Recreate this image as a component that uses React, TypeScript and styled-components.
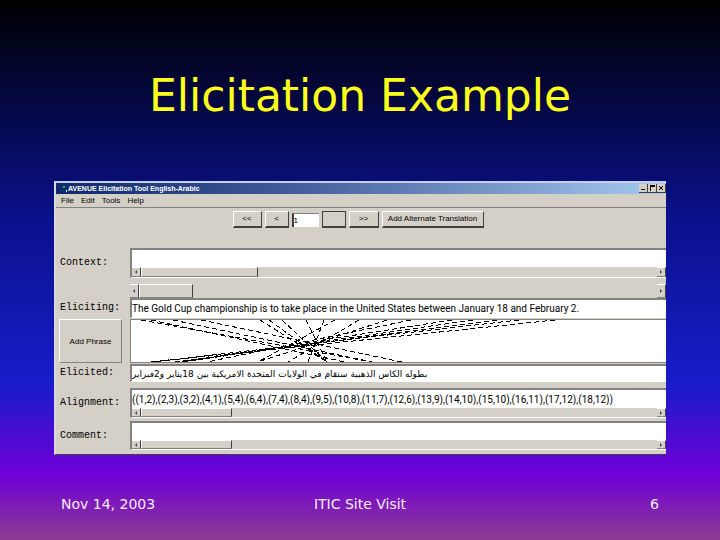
import React from "react";
import styled, { createGlobalStyle } from "styled-components";

const face = "#d4d0c8";
const shade = "#848280";
const dark = "#404040";

const Global = createGlobalStyle`
  * { box-sizing: border-box; }
  body { margin: 0; font-family: "Liberation Sans", Arial, sans-serif; font-size: 10px; color: #000; }
  button, input { font: inherit; color: inherit; border-radius: 0; }
`;

const Slide = styled.main`
  display: flex;
  flex-direction: column;
  align-items: center;
  min-height: 100vh;
  background: linear-gradient(#000000 0%, #0a118a 40%, #181cca 71%, #7000d8 88%, #8c3c90 100%);
`;

const Title = styled.h1`
  margin: 68px 0 57px;
  font: 400 44px/56px Verdana, "DejaVu Sans", sans-serif;
  color: #ffff1c;
`;

const AppWindow = styled.section`
  width: 85%;
  overflow: hidden;
  background: ${face};
  border-top: 2px solid #c4cff0;
  border-left: 2px solid #d8d8e0;
  border-bottom: 1px solid ${dark};
`;

const TitleBar = styled.header`
  display: flex;
  align-items: center;
  height: 11px;
  padding-left: 6px;
  background: linear-gradient(90deg, #0e2a6c, #3c5898 36%, #7c9ccc 74%, #a6caf0);
`;

const Caption = styled.h2`
  flex: 1;
  margin: 0;
  font-size: 7px;
  line-height: 11px;
  font-weight: 700;
  color: #fff;
`;

const CaptionButtons = styled.div`
  display: flex;
`;

const CaptionButton = styled.button`
  display: flex;
  width: 9px;
  height: 9px;
  padding: 0;
  border: 0;
  border-right: 1px solid ${dark};
  border-bottom: 1px solid ${dark};
  background: ${face};
`;

const MenuBar = styled.nav`
  display: flex;
  gap: 7px;
  height: 14px;
  padding-left: 5px;
  border-bottom: 1px solid ${shade};
`;

const MenuItem = styled.button`
  padding: 0;
  border: 0;
  background: none;
  font-size: 8px;
  line-height: 13px;
`;

const ToolBar = styled.div`
  display: flex;
  justify-content: center;
  gap: 3px;
  padding: 3px 6px 20px 0;
`;

const ToolButton = styled.button<{ $w: number; $active?: boolean }>`
  width: ${(p) => p.$w}px;
  height: 17px;
  padding: 0;
  font-size: 8px;
  line-height: 14px;
  white-space: nowrap;
  background: ${face};
  border: 1px solid ${(p) => (p.$active ? dark : "#fff")};
  border-right: 1px solid ${dark};
  border-bottom: 2px solid ${dark};
`;

const IndexInput = styled.input`
  width: 27px;
  height: 14px;
  margin-top: 2px;
  padding: 0;
  font-size: 8px;
  background: #fff;
  border: 0;
  border-top: 1px solid ${shade};
  border-left: 2px solid ${dark};
`;

const Form = styled.div`
  display: grid;
  grid-template-columns: 63px 1fr;
  column-gap: 8px;
  padding: 0 0 4px 3px;
`;

const Label = styled.label`
  align-self: center;
  padding-left: 1px;
  font: 10px/12px "Liberation Mono", "Courier New", monospace;
`;

const Row = styled.div<{ $gap: number }>`
  grid-column: 1 / -1;
  display: grid;
  grid-template-columns: subgrid;
  margin-bottom: ${(p) => p.$gap}px;
`;

const Field = styled.div`
  display: flex;
  flex-direction: column;
  border-top: 2px solid ${shade};
  border-left: 2px solid ${shade};
  border-bottom: 1px solid #fff;
`;

const TextInput = styled.input<{ $h: number }>`
  width: 100%;
  height: ${(p) => p.$h}px;
  padding: 0;
  border: 0;
  background: #fff;
  text-align: left;
  font-family: Roboto, "DejaVu Sans", sans-serif;

  &:lang(ar) {
    font-family: "DejaVu Sans", sans-serif;
    font-size: 9px;
  }
`;

const Scroll = styled.div<{ $h: number }>`
  display: flex;
  height: ${(p) => p.$h}px;
  background: ${face};
`;

const Arrow = styled.button`
  display: flex;
  align-items: center;
  justify-content: center;
  width: 9px;
  padding: 0;
  background: ${face};
  border: 0;
  border-top: 1px solid #fff;
  border-right: 1px solid ${dark};
  border-bottom: 1px solid ${shade};
`;

const Thumb = styled.div<{ $w: number }>`
  width: ${(p) => p.$w}%;
  margin-right: auto;
  border: 1px solid #fff;
  border-right-color: ${dark};
  border-bottom-color: ${shade};
`;

const Ruler = styled.div`
  grid-column: 2;
`;

const PhraseButton = styled.button`
  padding: 0;
  font-size: 8px;
  background: ${face};
  border: 1px solid #fff;
  border-right-color: ${shade};
  border-bottom-color: ${shade};
`;

const Canvas = styled.div`
  height: 44px;
  overflow: hidden;
  background: #fff;
  border: 1px solid ${shade};
  border-right: 0;
`;

const Lines = styled.svg`
  display: block;
`;

const Footer = styled.footer`
  display: grid;
  grid-template-columns: 1fr auto 1fr;
  width: 100%;
  margin-top: 40px;
  padding: 0 61px 20px;
  font: 14px/18px Verdana, "DejaVu Sans", sans-serif;
  color: #f8ecff;
`;

const PageNumber = styled.span`
  text-align: right;
`;

const links: [number, number][] = [
  [10, 241], [20, 214], [42, 241], [70, 271], [129, 196], [138, 196],
  [151, 196], [175, 196], [193, 177], [204, 127], [228, 157], [256, 127],
  [280, 76], [321, 51], [342, 51], [366, 42], [388, 20], [424, 20],
];

function ScrollBar({ thumb, height = 9 }: { thumb: number; height?: number }) {
  return (
    <Scroll $h={height}>
      <Arrow aria-label="Scroll left">
        <svg width="2" height="4" viewBox="0 0 2 4"><path d="M2 0v4L0 2z" fill={dark} /></svg>
      </Arrow>
      <Thumb $w={thumb} />
      <Arrow aria-label="Scroll right">
        <svg width="2" height="4" viewBox="0 0 2 4"><path d="M0 0v4l2-2z" fill={dark} /></svg>
      </Arrow>
    </Scroll>
  );
}

export default function App() {
  return (
    <>
      <Global />
      <Slide>
        <Title>Elicitation Example</Title>
        <AppWindow>
          <TitleBar>
            <svg width="6" height="8" viewBox="0 0 6 8">
              <path d="M1 1h2v2H1z" fill="#38a868" />
              <path d="M4 5h1v2H4z" fill="#d8e8e0" />
            </svg>
            <Caption>AVENUE Elicitation Tool English-Arabic</Caption>
            <CaptionButtons>
              <CaptionButton aria-label="Minimize">
                <svg width="8" height="8"><path d="M2 5h4v1H2z" /></svg>
              </CaptionButton>
              <CaptionButton aria-label="Maximize">
                <svg width="8" height="8"><path d="M2 1h5v2H3v4H2z" /></svg>
              </CaptionButton>
              <CaptionButton aria-label="Close">
                <svg width="8" height="8"><path d="M2 2l4 4M6 2L2 6" stroke="#000" /></svg>
              </CaptionButton>
            </CaptionButtons>
          </TitleBar>
          <MenuBar>
            <MenuItem>File</MenuItem>
            <MenuItem>Edit</MenuItem>
            <MenuItem>Tools</MenuItem>
            <MenuItem>Help</MenuItem>
          </MenuBar>
          <ToolBar>
            <ToolButton $w={29}>&lt;&lt;</ToolButton>
            <ToolButton $w={24}>&lt;</ToolButton>
            <IndexInput aria-label="Sentence number" defaultValue="1" />
            <ToolButton $w={24} $active aria-label="Next" />
            <ToolButton $w={30}>&gt;&gt;</ToolButton>
            <ToolButton $w={102}>Add Alternate Translation</ToolButton>
          </ToolBar>
          <Form>
            <Row $gap={6}>
              <Label htmlFor="context">Context:</Label>
              <Field>
                <TextInput id="context" $h={17} />
                <ScrollBar thumb={22} height={10} />
              </Field>
            </Row>
            <Ruler>
              <ScrollBar thumb={10} height={14} />
            </Ruler>
            <Row $gap={1}>
              <Label htmlFor="eliciting">Eliciting:</Label>
              <Field>
                <TextInput
                  id="eliciting"
                  $h={17}
                  defaultValue="The Gold Cup championship is to take place in the United States between January 18 and February 2."
                />
              </Field>
            </Row>
            <Row $gap={1}>
              <PhraseButton>Add Phrase</PhraseButton>
              <Canvas>
                <Lines width="536" height="42" shapeRendering="crispEdges">
                  {links.map(([from, to], i) => (
                    <line key={i} x1={from} y1="0" x2={to} y2="42" stroke="#000" strokeDasharray="5 3" />
                  ))}
                </Lines>
              </Canvas>
            </Row>
            <Row $gap={6}>
              <Label htmlFor="elicited">Elicited:</Label>
              <Field>
                <TextInput
                  id="elicited"
                  $h={15}
                  dir="rtl"
                  lang="ar"
                  defaultValue="بطوله الكاس الذهبية ستقام في الولايات المتحدة الامريكية بين 18يناير و2فبراير"
                />
              </Field>
            </Row>
            <Row $gap={3}>
              <Label htmlFor="alignment">Alignment:</Label>
              <Field>
                <TextInput
                  id="alignment"
                  $h={18}
                  defaultValue="((1,2),(2,3),(3,2),(4,1),(5,4),(6,4),(7,4),(8,4),(9,5),(10,8),(11,7),(12,6),(13,9),(14,10),(15,10),(16,11),(17,12),(18,12))"
                />
                <ScrollBar thumb={17} />
              </Field>
            </Row>
            <Row $gap={0}>
              <Label htmlFor="comment">Comment:</Label>
              <Field>
                <TextInput id="comment" $h={17} />
                <ScrollBar thumb={17} />
              </Field>
            </Row>
          </Form>
        </AppWindow>
        <Footer>
          <span>Nov 14, 2003</span>
          <span>ITIC Site Visit</span>
          <PageNumber>6</PageNumber>
        </Footer>
      </Slide>
    </>
  );
}
